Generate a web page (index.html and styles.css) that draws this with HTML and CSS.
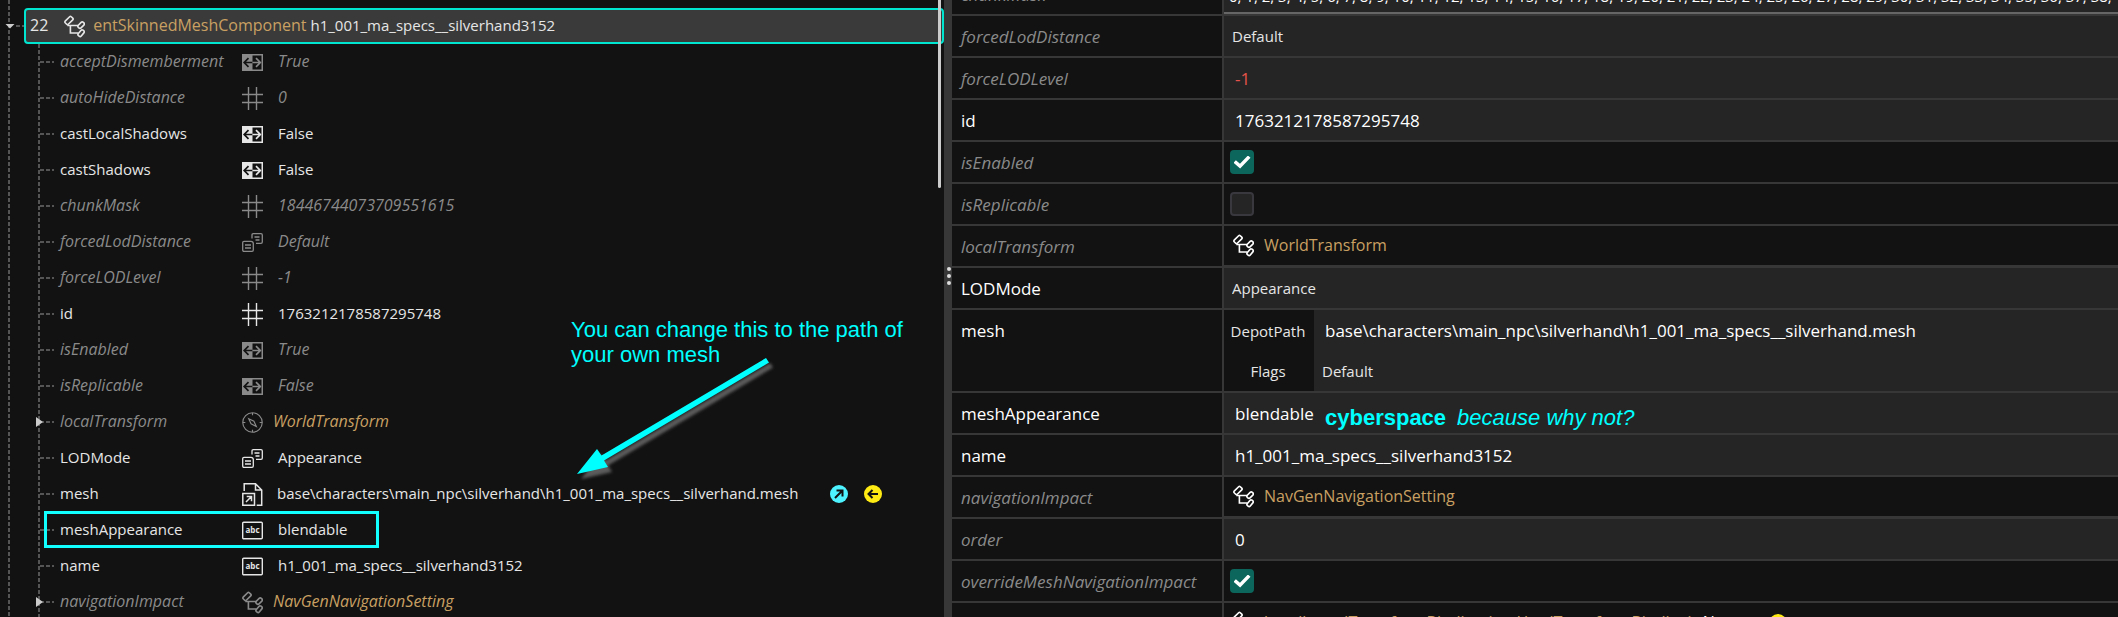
FILE: index.html
```html
<!DOCTYPE html>
<html lang="en">
<head>
<meta charset="utf-8">
<title>Mesh component properties</title>
<link rel="stylesheet" href="styles.css">
</head>
<body>
<svg class="sprite" aria-hidden="true">
  <symbol id="i-node" viewBox="0 0 22 22"><g fill="none" stroke="currentColor" stroke-width="1.7"><rect x="0.7" y="2.4" width="9" height="4.6" rx="1.2" transform="rotate(-45 5.2 4.7)"/><path d="M3.5 9.9H15M6.7 9.9v7.9H15"/><rect x="14.2" y="7.6" width="7.4" height="4" rx="1.6" transform="rotate(-45 17.9 9.6)"/><rect x="14.2" y="16" width="7.4" height="4" rx="1.6" transform="rotate(-50 17.9 18)"/></g></symbol>
  <symbol id="i-bool" viewBox="0 0 21 17"><path d="M0 0h21v17H0z" fill="currentColor"/><path d="M10.500 1.500h9v14h-9z" fill="#121212"/><path d="M10.500 8.500H2.500M6.500 4.200 2.200 8.500l4.300 4.300" fill="none" stroke="#121212" stroke-width="1.700"/><path d="M10.500 8.500h8M14 4.200l4.300 4.300-4.300 4.300" fill="none" stroke="currentColor" stroke-width="1.700"/></symbol>
  <symbol id="i-hash" viewBox="0 0 21 23"><path d="M6.500 0v23M14.500 0v23M0 7.500h21M0 15.500h21" fill="none" stroke="currentColor" stroke-width="1.400"/></symbol>
  <symbol id="i-enum" viewBox="0 0 21 19"><g fill="none" stroke="currentColor" stroke-width="1.300"><path d="M10 5.500V2q0-1.300 1.300-1.300h7.700q1.300 0 1.300 1.300v7q0 1.300-1.300 1.300h-5"/><path d="M12.500 4h5M13.500 7h4"/><path d="M2 8.300h7q2.300 0 2.300 2.300V17q0 1.300-1.300 1.300H2Q.7 18.300.7 17V9.600Q.7 8.300 2 8.300zM3 12h6M3 15h6"/></g></symbol>
  <symbol id="i-file" viewBox="0 0 21 23"><g fill="none" stroke="currentColor" stroke-width="1.500"><path d="M2.200 8V.8h11.300l6.200 6.200v15.200h-5M13.500.8V7h6.200"/><path d="M.8 10.500h11.700v11.700H.8zM4 19l5.200-5.200M4.700 13.500h4.800v4.800"/></g></symbol>
  <symbol id="i-abc" viewBox="0 0 21 18"><rect x=".7" y=".7" width="19.600" height="16.600" rx="1" fill="none" stroke="currentColor" stroke-width="1.400"/><text x="10.500" y="11.500" class="abc" text-anchor="middle">abc</text></symbol>
  <symbol id="i-compass" viewBox="0 0 22 23"><g fill="none" stroke="currentColor" stroke-width="1.200"><circle cx="11" cy="11.500" r="10.200"/><path d="M11 1.500v2.500M11 19v2.500M1 11.500h2.500M18.500 11.500H21M7 7.500l5.500 2.700 2.500 5.500-5.500-2.800z"/></g></symbol>
</svg>
<main class="editor">
  <section class="tree">
    <ul class="rows">
      <li class="selected-row"><span class="arrow-down"></span><div class="selected"><span class="index">22</span><svg class="icon node"><use href="#i-node"/></svg><span class="type">entSkinnedMeshComponent</span><span>h1_001_ma_specs__silverhand3152</span></div></li>
      <li class="row dim"><span>acceptDismemberment</span><svg class="icon bool"><use href="#i-bool"/></svg><span>True</span></li>
      <li class="row dim"><span>autoHideDistance</span><svg class="icon"><use href="#i-hash"/></svg><span>0</span></li>
      <li class="row"><span>castLocalShadows</span><svg class="icon bool"><use href="#i-bool"/></svg><span>False</span></li>
      <li class="row"><span>castShadows</span><svg class="icon bool"><use href="#i-bool"/></svg><span>False</span></li>
      <li class="row dim"><span>chunkMask</span><svg class="icon"><use href="#i-hash"/></svg><span>18446744073709551615</span></li>
      <li class="row dim"><span>forcedLodDistance</span><svg class="icon"><use href="#i-enum"/></svg><span>Default</span></li>
      <li class="row dim"><span>forceLODLevel</span><svg class="icon"><use href="#i-hash"/></svg><span>-1</span></li>
      <li class="row"><span>id</span><svg class="icon"><use href="#i-hash"/></svg><span>1763212178587295748</span></li>
      <li class="row dim"><span>isEnabled</span><svg class="icon bool"><use href="#i-bool"/></svg><span>True</span></li>
      <li class="row dim"><span>isReplicable</span><svg class="icon bool"><use href="#i-bool"/></svg><span>False</span></li>
      <li class="row dim parent"><span>localTransform</span><svg class="icon"><use href="#i-compass"/></svg><span class="type">WorldTransform</span></li>
      <li class="row"><span>LODMode</span><svg class="icon"><use href="#i-enum"/></svg><span>Appearance</span></li>
      <li class="row"><span>mesh</span><svg class="icon"><use href="#i-file"/></svg><div class="path"><span>base\characters\main_npc\silverhand\h1_001_ma_specs__silverhand.mesh</span><button class="dot open" aria-label="Open file"><svg viewBox="0 0 18 18"><path d="M5 13l7-7M6.500 5.500h6v6"/></svg></button><button class="dot back" aria-label="Use selected"><svg viewBox="0 0 18 18"><path d="M14 9H5M8.500 5 4.500 9l4 4"/></svg></button></div></li>
      <li class="row"><span>meshAppearance</span><svg class="icon"><use href="#i-abc"/></svg><span>blendable</span></li>
      <li class="row"><span>name</span><svg class="icon"><use href="#i-abc"/></svg><span>h1_001_ma_specs__silverhand3152</span></li>
      <li class="row dim parent"><span>navigationImpact</span><svg class="icon"><use href="#i-node"/></svg><span class="type">NavGenNavigationSetting</span></li>
    </ul>
    <div class="scroll-thumb"></div>
    <div class="frame"></div>
    <p class="note">You can change this to the path of<br>your own mesh</p>
    <svg class="pointer" viewBox="0 0 210 130" aria-hidden="true">
      <defs><filter id="soft" x="-10%" y="-10%" width="120%" height="120%"><feGaussianBlur stdDeviation="1.500"/></filter><path id="arrow" d="M7 119 27 94 31.500 100.500 196 3 199 7.500 34 105.500 38 112z"/></defs>
      <use href="#arrow" x="4" y="5" fill="#5c5c5c" filter="url(#soft)"/><use href="#arrow" fill="#00ffff"/>
    </svg>
  </section>
  <div class="splitter"><i></i><i></i><i></i></div>
  <section class="props">
    <div class="prop dim"><label for="p0">chunkMask</label><div class="value field underlined"><input id="p0" class="small" value="0, 1, 2, 3, 4, 5, 6, 7, 8, 9, 10, 11, 12, 13, 14, 15, 16, 17, 18, 19, 20, 21, 22, 23, 24, 25, 26, 27, 28, 29, 30, 31, 32, 33, 34, 35, 36, 37, 38, 39, 40"></div></div>
    <div class="prop dim"><label for="p1">forcedLodDistance</label><div class="value field"><select id="p1"><option>Default</option></select></div></div>
    <div class="prop dim"><label for="p2">forceLODLevel</label><div class="value field"><input id="p2" class="negative" value="-1"></div></div>
    <div class="prop"><label for="p3">id</label><div class="value field"><input id="p3" value="1763212178587295748"></div></div>
    <div class="prop dim"><label for="p4">isEnabled</label><div class="value"><input id="p4" type="checkbox" checked></div></div>
    <div class="prop dim"><label for="p5">isReplicable</label><div class="value"><input id="p5" type="checkbox"></div></div>
    <div class="prop dim"><span class="label">localTransform</span><div class="value object"><svg class="icon node"><use href="#i-node"/></svg><span class="type">WorldTransform</span></div></div>
    <div class="prop"><label for="p6">LODMode</label><div class="value field"><select id="p6"><option>Appearance</option></select></div></div>
    <div class="prop"><span class="label">mesh</span><div class="value resource"><label for="p7">DepotPath</label><input id="p7" value="base\characters\main_npc\silverhand\h1_001_ma_specs__silverhand.mesh"><label for="p8">Flags</label><select id="p8"><option>Default</option></select></div></div>
    <div class="prop"><label for="p9">meshAppearance</label><div class="value field"><input id="p9" value="blendable"><p class="note hint"><b>cyberspace</b><i>because why not?</i></p></div></div>
    <div class="prop"><label for="p10">name</label><div class="value field"><input id="p10" value="h1_001_ma_specs__silverhand3152"></div></div>
    <div class="prop dim"><span class="label">navigationImpact</span><div class="value object"><svg class="icon node"><use href="#i-node"/></svg><span class="type">NavGenNavigationSetting</span></div></div>
    <div class="prop dim"><label for="p11">order</label><div class="value field"><input id="p11" value="0"></div></div>
    <div class="prop dim"><label for="p12">overrideMeshNavigationImpact</label><div class="value"><input id="p12" type="checkbox" checked></div></div>
    <div class="prop"><span class="label">parentTransform</span><div class="value object"><svg class="icon node"><use href="#i-node"/></svg><span class="type">handle:entITransformBinding (entHardTransformBinding)</span><span class="empty">None</span><button class="dot back" aria-label="Use selected"></button></div></div>
  </section>
</main>
</body>
</html>
```

FILE: styles.css
```css
* { box-sizing: border-box; }
body { margin: 0; background: #121212; color: #e6e6e6; font: 16px/20px "Open Sans", "Noto Sans", sans-serif; }
.sprite { position: absolute; width: 0; height: 0; }
.abc { font: 700 8px "Open Sans", sans-serif; fill: currentColor; }
.editor { display: grid; grid-template-columns: minmax(0, 944fr) 8px minmax(0, 1166fr); height: 100vh; overflow: hidden; }

.tree { position: relative; overflow: hidden; padding-top: 8px; font-size: 15px; white-space: nowrap;
  background: repeating-linear-gradient(#555 0 4px, transparent 4px 6px) 8px 0 / 2px 100% no-repeat; }
.rows { list-style: none; margin: 0; padding: 0;
  background: repeating-linear-gradient(#555 0 4px, transparent 4px 6px) 38px 36px / 2px 100% no-repeat; }
.selected-row { display: flex; align-items: center; height: 36px; padding-left: 5px;
  background: repeating-linear-gradient(90deg, #555 0 4px, transparent 4px 6px) 16px 17px / 8px 2px no-repeat; }
.arrow-down { width: 19px; height: 5px; flex: none; background: #ccc; clip-path: polygon(0 0, 10px 0, 5px 5px); }
.selected { flex: 1; display: flex; align-items: center; height: 36px; padding-left: 4px; background: #3a3a3a; border: 2px solid #00e5d0; border-radius: 4px; }
.selected span, .row span { padding-bottom: 2px; }
.index { font-size: 16px; }
.selected .icon { margin: 0 8px 0 16px; }
.selected .type { margin-right: 4px; }
.row { position: relative; display: grid; grid-template-columns: 182px 22px minmax(0, 1fr); align-items: center; height: 36px; padding-left: 60px;
  background: repeating-linear-gradient(90deg, #555 0 4px, transparent 4px 6px) 40px 17px / 14px 2px no-repeat; }
.row > span:last-child { padding-left: 14px; }
.row > .type:last-child { padding-left: 9px; }
.dim { color: #8a8a8a; font-style: italic; }
.tree .dim, .type { font-size: 16px; }
.type { color: #c9a062; }
.parent::before { content: ""; position: absolute; left: 36px; top: 13px; width: 7px; height: 10px; background: #ccc; clip-path: polygon(0 0, 100% 50%, 0 100%); }
.icon { display: block; width: 21px; height: 23px; flex: none; }
.bool { height: 17px; }
.path { display: flex; align-items: center; padding-left: 13px; }
.dot { width: 18px; height: 18px; margin: 0 0 0 16px; padding: 0; border: 0; border-radius: 50%; flex: none; }
.dot svg { display: block; fill: none; stroke: #121212; stroke-width: 2; }
.open { background: #4df3ff; margin-left: 32px; }
.back { background: #ffeb14; }
.scroll-thumb { position: absolute; right: 3px; top: 0; width: 3px; height: 188px; background: #ccc; border-radius: 0 0 2px 2px; }
.frame { position: absolute; left: 44px; top: 511px; width: 335px; height: 37px; border: 3px solid #1ff; }
.note { position: absolute; left: 571px; top: 317px; margin: 0; color: #0ff; font: 22px/25px "Liberation Sans", Arial, sans-serif; }
.pointer { position: absolute; left: 570px; top: 355px; width: 210px; height: 130px; }

.splitter { display: flex; flex-direction: column; align-items: center; gap: 3px; padding: 267px 0 0 2px; background: #373737; }
.splitter i { width: 4px; height: 4px; border-radius: 50%; background: #ddd; }

.props { margin-top: -26px; white-space: nowrap; overflow: hidden; font-size: 17px; }
.prop { display: grid; grid-template-columns: 272px minmax(0, 1fr); min-height: 42px; border-bottom: 2px solid #373737; }
.prop > label, .label { padding: 11px 0 0 9px; border-right: 2px solid #373737; }
.prop:not(.dim) > label, .prop:not(.dim) > .label { color: #fff; }
.value { position: relative; display: flex; align-items: center; color: #e6e6e6; font-style: normal; }
.field { background: #252525; }
.underlined { border-bottom: 2px solid #666; }
.object { gap: 10px; padding-left: 9px; border-bottom: 1px solid #373737; }
.object span { padding-bottom: 1px; }
.object .icon { color: #fff; }
.empty { color: #fff; font-size: 16px; }
input, select { width: 100%; height: 40px; margin: 0; padding: 0 11px; border: 0; background: none; color: #fff; font: inherit; appearance: none; outline: 0; }
select { padding: 0 8px; color: #e6e6e6; font-size: 15px; }
input.small { height: 38px; padding: 5px 5px 0; font-size: 15px; }
.negative { color: #e5534b; }
input[type="checkbox"] { width: 24px; height: 24px; margin-left: 6px; padding: 0; border: 2px solid #38383e; border-radius: 4px; background: #252525; }
input[type="checkbox"]:checked { border-color: #0c665c; background: #0c665c; display: grid; place-items: center; }
input[type="checkbox"]:checked::before { content: ""; width: 17px; height: 13px; background: #fff; clip-path: polygon(0 55%, 14% 37%, 38% 64%, 85% 0, 100% 17%, 39% 100%); }
.resource { display: grid; grid-template-columns: 90px minmax(0, 1fr); grid-template-rows: 41px 40px; background: linear-gradient(90deg, transparent 90px, #252525 90px); }
.resource label { justify-self: center; font-size: 15px; padding-right: 2px; }
.hint { left: 101px; top: 12px; }
.hint i { margin-left: 11px; }
```
